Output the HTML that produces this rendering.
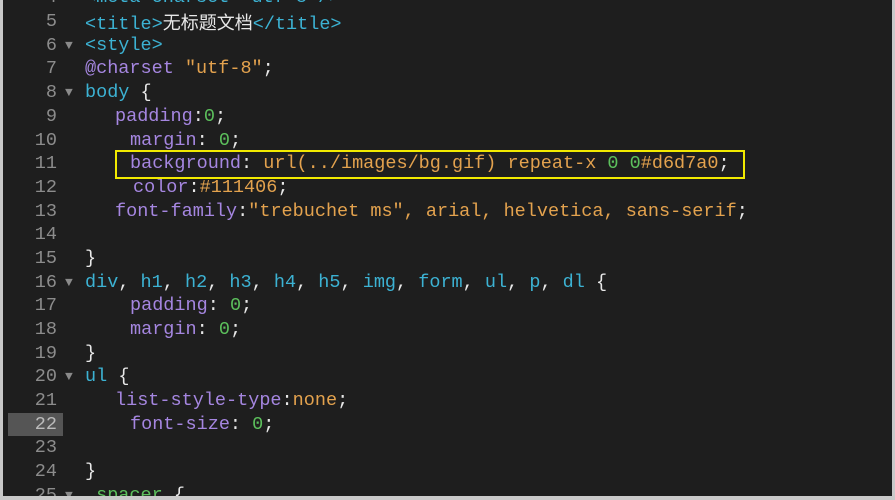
<!DOCTYPE html>
<html><head><meta charset="utf-8"><style>
html,body{margin:0;padding:0}
body{width:895px;height:500px;background:#c9c9c9;position:relative;overflow:hidden;font-family:"Liberation Mono","Noto Sans CJK SC",monospace;font-size:18.5px}
#ed{position:absolute;left:3px;top:0;width:889px;height:496px;background:#1e1e1e;overflow:hidden}
.l{position:absolute;left:0;height:24px;line-height:24px;white-space:pre;width:889px}
.n{position:absolute;right:835px;color:#8c8c8c;text-align:right}
.c{position:absolute;color:#e8e8e8}
.a{position:absolute;left:62px;color:#8a8a8a;font-size:13px}
.t{color:#3cb2d3}.p{color:#a586e0}.v{color:#e3a24e}.g{color:#5cc05c}.w{color:#e8e8e8}
.cn{font-family:"Noto Sans CJK SC",sans-serif;font-size:18px}
#hl{position:absolute;left:5px;top:413px;width:55px;height:23px;background:#555}
#box{position:absolute;left:112px;top:150px;width:626px;height:25px;border:2px solid #f2ea00}
</style></head><body>
<div id="ed">
<div id="hl"></div>
<div class="l" style="top:-14px"><span class="n">4</span><span class="c t" style="left:82px">&lt;meta charset="utf-8"/&gt;</span></div>
<div class="l" style="top:10px"><span class="n">5</span><span class="c" style="left:82px"><span class="t">&lt;title&gt;</span><span class="cn">无标题文档</span><span class="t">&lt;/title&gt;</span></span></div>
<div class="l" style="top:34px"><span class="n">6</span><span class="a">▼</span><span class="c t" style="left:82px">&lt;style&gt;</span></div>
<div class="l" style="top:57px"><span class="n">7</span><span class="c" style="left:82px"><span class="p">@charset</span> <span class="v">"utf-8"</span>;</span></div>
<div class="l" style="top:81px"><span class="n">8</span><span class="a">▼</span><span class="c" style="left:82px"><span class="t">body</span> {</span></div>
<div class="l" style="top:105px"><span class="n">9</span><span class="c" style="left:112px"><span class="p">padding</span>:<span class="g">0</span>;</span></div>
<div class="l" style="top:129px"><span class="n">10</span><span class="c" style="left:127px"><span class="p">margin</span>: <span class="g">0</span>;</span></div>
<div class="l" style="top:152px"><span class="n">11</span><span class="c" style="left:127px"><span class="p">background</span>: <span class="v">url(../images/bg.gif) repeat-x</span> <span class="g">0 0</span><span class="v">#d6d7a0</span>;</span></div>
<div class="l" style="top:176px"><span class="n">12</span><span class="c" style="left:130px"><span class="p">color</span>:<span class="v">#111406</span>;</span></div>
<div class="l" style="top:200px"><span class="n">13</span><span class="c" style="left:112px"><span class="p">font-family</span>:<span class="v">"trebuchet ms", arial, helvetica, sans-serif</span>;</span></div>
<div class="l" style="top:223px"><span class="n">14</span></div>
<div class="l" style="top:247px"><span class="n">15</span><span class="c" style="left:82px">}</span></div>
<div class="l" style="top:271px"><span class="n">16</span><span class="a">▼</span><span class="c" style="left:82px"><span class="t">div</span>, <span class="t">h1</span>, <span class="t">h2</span>, <span class="t">h3</span>, <span class="t">h4</span>, <span class="t">h5</span>, <span class="t">img</span>, <span class="t">form</span>, <span class="t">ul</span>, <span class="t">p</span>, <span class="t">dl</span> {</span></div>
<div class="l" style="top:294px"><span class="n">17</span><span class="c" style="left:127px"><span class="p">padding</span>: <span class="g">0</span>;</span></div>
<div class="l" style="top:318px"><span class="n">18</span><span class="c" style="left:127px"><span class="p">margin</span>: <span class="g">0</span>;</span></div>
<div class="l" style="top:342px"><span class="n">19</span><span class="c" style="left:82px">}</span></div>
<div class="l" style="top:365px"><span class="n">20</span><span class="a">▼</span><span class="c" style="left:82px"><span class="t">ul</span> {</span></div>
<div class="l" style="top:389px"><span class="n">21</span><span class="c" style="left:112px"><span class="p">list-style-type</span>:<span class="v">none</span>;</span></div>
<div class="l" style="top:413px"><span class="n" style="color:#bbb">22</span><span class="c" style="left:127px"><span class="p">font-size</span>: <span class="g">0</span>;</span></div>
<div class="l" style="top:436px"><span class="n">23</span></div>
<div class="l" style="top:460px"><span class="n">24</span><span class="c" style="left:82px">}</span></div>
<div class="l" style="top:484px"><span class="n">25</span><span class="a">▼</span><span class="c" style="left:82px"><span class="g">.spacer</span> {</span></div>
<div id="box"></div>
</div>
</body></html>
